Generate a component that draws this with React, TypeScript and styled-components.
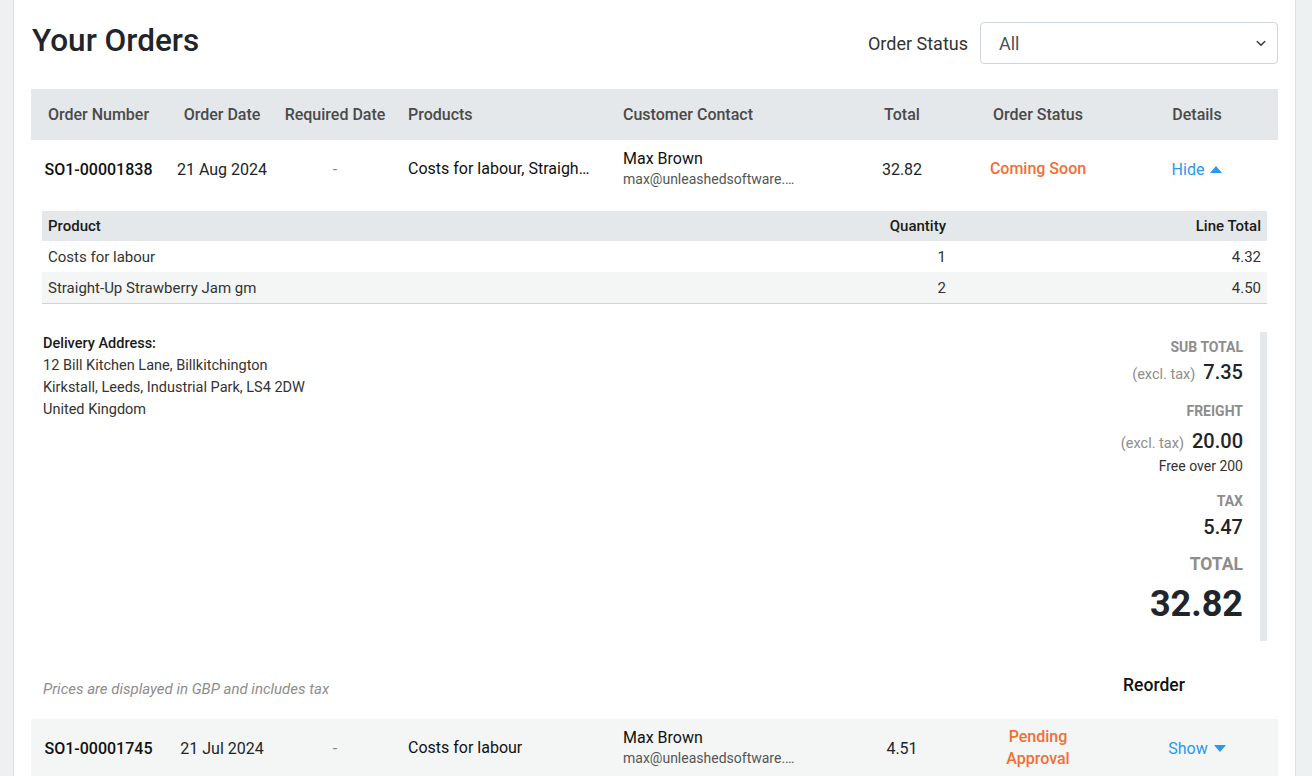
import React from "react";
import styled, { createGlobalStyle } from "styled-components";

const GlobalStyle = createGlobalStyle`
  html, body {
    margin: 0;
    padding: 0;
    background: #eef1f2;
    font-family: Roboto, "Liberation Sans", sans-serif;
    color: #212529;
  }
`;

const COLS = "135px 112px 114px 215px 237px 116px 156px 162px";

const Card = styled.main`
  margin-left: 13px;
  width: 1283px;
  box-sizing: border-box;
  background: #fff;
  border-left: 1px solid #dde2e5;
  border-right: 1px solid #dde2e5;
  padding: 22px 17px 0;
  min-height: 776px;
`;

const TopBar = styled.div`
  display: flex;
  align-items: center;
  justify-content: space-between;
  height: 42px;
  margin-bottom: 25px;
`;

const Title = styled.h1`
  margin: 0 0 5px 1px;
  font-size: 31.5px;
  font-weight: 500;
  color: #212529;
`;

const Filter = styled.label`
  display: flex;
  align-items: center;
  gap: 12px;
  font-size: 18px;
  color: #333;
`;

const Select = styled.div`
  width: 298px;
  height: 42px;
  box-sizing: border-box;
  border: 1px solid #ced4da;
  border-radius: 4px;
  display: flex;
  align-items: center;
  justify-content: space-between;
  padding: 0 10px 0 18px;
  font-size: 18px;
  color: #495057;
`;

const Grid = styled.div<{ $bg?: string; $h: number }>`
  display: grid;
  grid-template-columns: ${COLS};
  align-items: center;
  height: ${(p) => p.$h}px;
  background: ${(p) => p.$bg || "transparent"};
`;

const HeadCell = styled.div<{ $left?: boolean }>`
  font-size: 16px;
  font-weight: 500;
  color: #4a4a4a;
  text-align: ${(p) => (p.$left ? "left" : "center")};
  padding-left: ${(p) => (p.$left ? "16px" : "0")};
`;

const Cell = styled.div<{ $left?: boolean; $strong?: boolean }>`
  font-size: 16px;
  font-weight: ${(p) => (p.$strong ? 500 : 400)};
  color: ${(p) => (p.$strong ? "#111" : "#212529")};
  text-align: ${(p) => (p.$left ? "left" : "center")};
  padding-left: ${(p) => (p.$left ? "16px" : "0")};
  min-width: 0;
`;

const Dash = styled(Cell)`
  color: #888;
`;

const Clip = styled.div<{ $size: number; $color: string; $max: number }>`
  max-width: ${(p) => p.$max}px;
  white-space: nowrap;
  overflow: hidden;
  text-overflow: ellipsis;
  font-size: ${(p) => p.$size}px;
  color: ${(p) => p.$color};
  line-height: 20px;
`;

const Status = styled.div`
  font-size: 16px;
  font-weight: 500;
  color: #f26f33;
  text-align: center;
  line-height: 22px;
`;

const Toggle = styled.span`
  display: inline-flex;
  align-items: center;
  gap: 6px;
  font-size: 16px;
  color: #2a97f0;
  cursor: pointer;
`;

const Detail = styled.section`
  padding: 13px 11px 21px;
`;

const SubGrid = styled.div<{ $head?: boolean; $alt?: boolean }>`
  display: grid;
  grid-template-columns: 1fr 160px 315px;
  align-items: center;
  height: ${(p) => (p.$head ? 30 : 31)}px;
  background: ${(p) => (p.$head ? "#e4e8ea" : p.$alt ? "#f4f6f6" : "#fff")};
  font-size: 15px;
  font-weight: ${(p) => (p.$head ? 500 : 400)};
  color: ${(p) => (p.$head ? "#1a1a1a" : "#333")};
  border-bottom: ${(p) => (p.$alt ? "1px solid #ccd5db" : "none")};
  & > div {
    padding: 0 6px;
  }
  & > div:not(:first-child) {
    text-align: right;
  }
`;

const Summary = styled.div`
  display: flex;
  justify-content: space-between;
  align-items: flex-start;
  margin-top: 28px;
`;

const Address = styled.div`
  padding: 0 1px;
  margin-top: 1px;
  font-size: 14.5px;
  line-height: 22px;
  color: #333;
  & > strong {
    font-weight: 500;
    color: #1a1a1a;
  }
`;

const Totals = styled.div`
  width: 150px;
  padding: 6px 17px 14px 0;
  border-right: 7px solid #e4e8ea;
  text-align: right;
`;

const Label = styled.div<{ $big?: boolean }>`
  font-size: ${(p) => (p.$big ? 17.5 : 14)}px;
  line-height: ${(p) => (p.$big ? 22 : 18)}px;
  font-weight: 700;
  color: #8d8d8d;
  margin-top: ${(p) => (p.$big ? 12 : 0)}px;
`;

const Value = styled.div<{ $big?: boolean; $gap?: number; $top?: number }>`
  font-size: ${(p) => (p.$big ? 36 : 20)}px;
  line-height: ${(p) => (p.$big ? 46 : 28)}px;
  font-weight: ${(p) => (p.$big ? 700 : 500)};
  color: #212529;
  margin-bottom: ${(p) => p.$gap || 0}px;
  margin-top: ${(p) => (p.$top !== undefined ? p.$top : p.$big ? 6 : 3)}px;
`;

const Excl = styled.span`
  font-size: 14.5px;
  font-weight: 400;
  color: #8d8d8d;
  margin-right: 8px;
`;

const Note = styled.div<{ $gap?: number }>`
  font-size: 14px;
  line-height: 20px;
  color: #333;
  margin-top: -2px;
  margin-bottom: ${(p) => p.$gap || 0}px;
`;

const Footer = styled.div`
  display: flex;
  justify-content: space-between;
  align-items: center;
  margin-top: 31px;
  padding: 0 1px;
`;

const Hint = styled.div`
  font-size: 15px;
  font-style: italic;
  color: #8d8d8d;
  margin-top: 8px;
`;

const Reorder = styled.button`
  border: none;
  background: none;
  font-family: inherit;
  font-size: 17.5px;
  font-weight: 500;
  color: #111;
  width: 150px;
  margin-right: 37px;
  padding: 0;
  cursor: pointer;
`;

const Caret = ({ up }: { up?: boolean }) => (
  <svg width="12" height="7" viewBox="0 0 12 7">
    <path d={up ? "M0 7 L6 0 L12 7 Z" : "M0 0 L6 7 L12 0 Z"} fill="currentColor" />
  </svg>
);

const Chevron = () => (
  <svg width="12" height="12" viewBox="0 0 16 16">
    <path d="M3 6 L8 11 L13 6" fill="none" stroke="#343a40" strokeWidth="2" strokeLinecap="round" strokeLinejoin="round" />
  </svg>
);

const Contact = () => (
  <Cell $left>
    <Clip $size={16} $color="#111" $max={180}>
      Max Brown
    </Clip>
    <Clip $size={14} $color="#555" $max={178}>
      max@unleashedsoftware.com
    </Clip>
  </Cell>
);

export default function App() {
  return (
    <>
      <GlobalStyle />
      <Card>
        <TopBar>
          <Title>Your Orders</Title>
          <Filter>
            Order Status
            <Select>
              All
              <Chevron />
            </Select>
          </Filter>
        </TopBar>

        <Grid $h={51} $bg="#e4e8ea">
          <HeadCell>Order Number</HeadCell>
          <HeadCell>Order Date</HeadCell>
          <HeadCell>Required Date</HeadCell>
          <HeadCell $left>Products</HeadCell>
          <HeadCell $left>Customer Contact</HeadCell>
          <HeadCell>Total</HeadCell>
          <HeadCell>Order Status</HeadCell>
          <HeadCell>Details</HeadCell>
        </Grid>

        <Grid $h={58}>
          <Cell $strong>SO1-00001838</Cell>
          <Cell>21 Aug 2024</Cell>
          <Dash>-</Dash>
          <Cell $left>
            <Clip $size={16} $color="#111" $max={186}>
              Costs for labour, Straight-Up Strawberry Jam gm
            </Clip>
          </Cell>
          <Contact />
          <Cell>32.82</Cell>
          <Status>Coming Soon</Status>
          <Cell>
            <Toggle>
              Hide <Caret up />
            </Toggle>
          </Cell>
        </Grid>

        <Detail>
          <SubGrid $head>
            <div>Product</div>
            <div>Quantity</div>
            <div>Line Total</div>
          </SubGrid>
          <SubGrid>
            <div>Costs for labour</div>
            <div>1</div>
            <div>4.32</div>
          </SubGrid>
          <SubGrid $alt>
            <div>Straight-Up Strawberry Jam gm</div>
            <div>2</div>
            <div>4.50</div>
          </SubGrid>

          <Summary>
            <Address>
              <strong>Delivery Address:</strong>
              <br />
              12 Bill Kitchen Lane, Billkitchington
              <br />
              Kirkstall, Leeds, Industrial Park, LS4 2DW
              <br />
              United Kingdom
            </Address>
            <Totals>
              <Label>SUB TOTAL</Label>
              <Value $gap={13} $top={2}>
                <Excl>(excl. tax)</Excl>7.35
              </Value>
              <Label>FREIGHT</Label>
              <Value $top={7}>
                <Excl>(excl. tax)</Excl>20.00
              </Value>
              <Note $gap={16}>Free over 200</Note>
              <Label>TAX</Label>
              <Value>5.47</Value>
              <Label $big>TOTAL</Label>
              <Value $big>32.82</Value>
            </Totals>
          </Summary>

          <Footer>
            <Hint>Prices are displayed in GBP and includes tax</Hint>
            <Reorder>Reorder</Reorder>
          </Footer>
        </Detail>

        <Grid $h={58} $bg="#f4f6f6">
          <Cell $strong>SO1-00001745</Cell>
          <Cell>21 Jul 2024</Cell>
          <Dash>-</Dash>
          <Cell $left>
            <Clip $size={16} $color="#111" $max={186}>
              Costs for labour
            </Clip>
          </Cell>
          <Contact />
          <Cell>4.51</Cell>
          <Status>
            Pending
            <br />
            Approval
          </Status>
          <Cell>
            <Toggle>
              Show <Caret />
            </Toggle>
          </Cell>
        </Grid>
      </Card>
    </>
  );
}
